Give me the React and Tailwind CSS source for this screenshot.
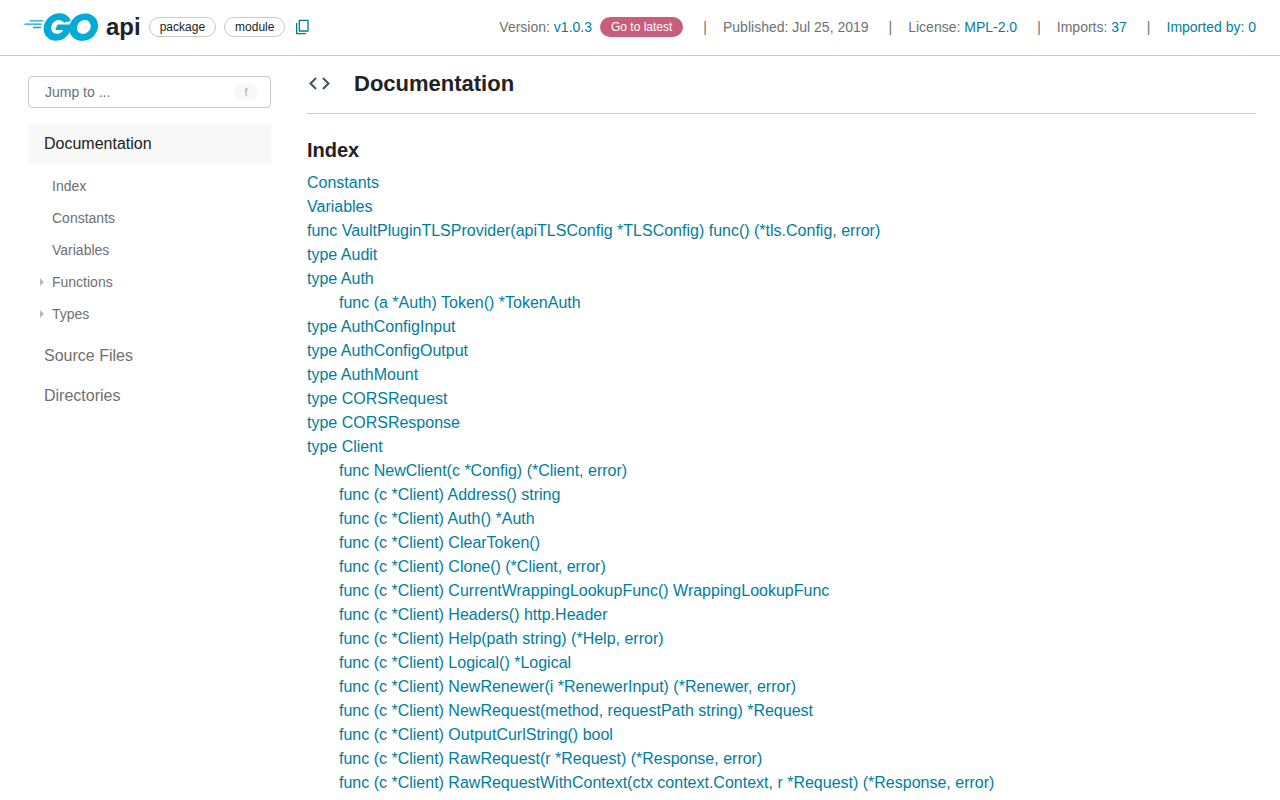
import React from "react";

const INDEX = [
  { label: "Constants" },
  { label: "Variables" },
  { label: "func VaultPluginTLSProvider(apiTLSConfig *TLSConfig) func() (*tls.Config, error)" },
  { label: "type Audit" },
  { label: "type Auth", children: ["func (a *Auth) Token() *TokenAuth"] },
  { label: "type AuthConfigInput" },
  { label: "type AuthConfigOutput" },
  { label: "type AuthMount" },
  { label: "type CORSRequest" },
  { label: "type CORSResponse" },
  {
    label: "type Client",
    children: [
      "func NewClient(c *Config) (*Client, error)",
      "func (c *Client) Address() string",
      "func (c *Client) Auth() *Auth",
      "func (c *Client) ClearToken()",
      "func (c *Client) Clone() (*Client, error)",
      "func (c *Client) CurrentWrappingLookupFunc() WrappingLookupFunc",
      "func (c *Client) Headers() http.Header",
      "func (c *Client) Help(path string) (*Help, error)",
      "func (c *Client) Logical() *Logical",
      "func (c *Client) NewRenewer(i *RenewerInput) (*Renewer, error)",
      "func (c *Client) NewRequest(method, requestPath string) *Request",
      "func (c *Client) OutputCurlString() bool",
      "func (c *Client) RawRequest(r *Request) (*Response, error)",
      "func (c *Client) RawRequestWithContext(ctx context.Context, r *Request) (*Response, error)",
    ],
  },
];

const SECTIONS = [
  { label: "Index" },
  { label: "Constants" },
  { label: "Variables" },
  { label: "Functions", expandable: true },
  { label: "Types", expandable: true },
];

function Logo() {
  return (
    <svg viewBox="0 0 205.4 76.7" className="h-7 w-[74px]" fill="#00acd7" aria-hidden="true">
      <path d="M15.5,23.2c-0.4,0-0.5-0.2-0.3-0.5l2.1-2.7c0.2-0.3,0.7-0.5,1.1-0.5l35.7,0c0.4,0,0.5,0.3,0.3,0.6l-1.7,2.6c-0.2,0.3-0.7,0.6-1,0.6L15.5,23.2z" />
      <path d="M0.4,32.4c-0.4,0-0.5-0.2-0.3-0.5l2.1-2.7c0.2-0.3,0.7-0.5,1.1-0.5l45.6,0c0.4,0,0.6,0.3,0.5,0.6l-0.8,2.4c-0.1,0.4-0.5,0.6-0.9,0.6L0.4,32.4z" />
      <path d="M24.6,41.6c-0.4,0-0.5-0.3-0.3-0.6l1.4-2.5c0.2-0.3,0.6-0.6,1-0.6l20,0c0.4,0,0.6,0.3,0.6,0.7L47.1,41c0,0.4-0.4,0.7-0.7,0.7L24.6,41.6z" />
      <path d="M128.3,21.4c-6.3,1.6-10.6,2.8-16.8,4.4c-1.5,0.4-1.6,0.5-2.9-1c-1.5-1.7-2.6-2.8-4.7-3.8c-6.3-3.1-12.4-2.2-18.1,1.5c-6.8,4.4-10.3,10.9-10.2,19c0.1,8,5.6,14.6,13.5,15.7c6.8,0.9,12.5-1.5,17-6.6c0.9-1.1,1.7-2.3,2.7-3.7c-3.6,0-8.1,0-19.3,0c-2.1,0-2.6-1.3-1.9-3c1.3-3.1,3.7-8.3,5.1-10.9c0.3-0.6,1-1.6,2.5-1.6c5.1,0,23.9,0,36.4,0c-0.2,2.7-0.2,5.4-0.6,8.1c-1.1,7.2-3.8,13.8-8.2,19.6c-7.2,9.5-16.6,15.4-28.5,17c-9.8,1.3-18.9-0.6-26.9-6.6c-7.4-5.6-11.6-13-12.7-22.2c-1.3-10.9,1.9-20.7,8.5-29.3c7.1-9.3,16.5-15.2,28-17.3c9.4-1.7,18.4-0.6,26.5,4.9c5.3,3.5,9.1,8.3,11.6,14.1C130,20.6,129.9,21.1,128.3,21.4z" />
      <path d="M161.5,76.7c-9.1-0.2-17.4-2.8-24.4-8.8c-5.9-5.1-9.6-11.6-10.8-19.3c-1.8-11.3,1.3-21.3,8.1-30.2c7.3-9.6,16.1-14.6,28-16.7c10.2-1.8,19.8-0.8,28.5,5.1c7.9,5.4,12.8,12.7,14.1,22.3c1.7,13.5-2.2,24.5-11.5,33.9c-6.6,6.7-14.7,10.9-24,12.8C166.8,76.3,164.1,76.4,161.5,76.7z M185.3,36.3c-0.1-1.3-0.1-2.3-0.3-3.3c-1.8-9.9-10.9-15.5-20.4-13.3c-9.3,2.1-15.3,8-17.5,17.4c-1.8,7.8,2,15.7,9.2,18.9c5.5,2.4,11,2.1,16.3-0.6C180.5,51.3,184.8,44.7,185.3,36.3z" />
    </svg>
  );
}

function Link({ children }) {
  return (
    <a href="#" className="text-[#007d9c] hover:underline">
      {children}
    </a>
  );
}

function Chip({ children }) {
  return (
    <span className="flex h-5 items-center rounded-full border border-[#c6c8ca] px-2.5 text-xs text-[#202224]">
      {children}
    </span>
  );
}

function Divider() {
  return <span className="pr-4 pl-5 text-[#6e7072]">|</span>;
}

function Header() {
  return (
    <header className="flex h-14 items-center justify-between border-b border-[#c6c8ca] px-6 pb-0.5">
      <div className="flex items-center">
        <a href="#" aria-label="Go home">
          <Logo />
        </a>
        <h1 className="ml-2 text-2xl font-bold">api</h1>
        <div className="ml-2 flex items-center gap-2">
          <Chip>package</Chip>
          <Chip>module</Chip>
          <button type="button" aria-label="Copy path" className="pl-px text-[#007d9c]">
            <svg viewBox="0 0 24 24" className="size-4" fill="currentColor">
              <path d="M22 1H7v18h15V1zm-2 16H9V3h11v14zM3 6h2v15h13v2H3V6z" />
            </svg>
          </button>
        </div>
      </div>
      <div className="flex items-center text-sm text-[#6e7072]">
        <span>
          Version: <Link>v1.0.3</Link>
        </span>
        <a
          href="#"
          className="ml-2 flex h-5 items-center rounded-full bg-[#c85e7c] px-[11px] text-xs text-white"
        >
          Go to latest
        </a>
        <Divider />
        <span>Published: Jul 25, 2019</span>
        <Divider />
        <span>
          License: <Link>MPL-2.0</Link>
        </span>
        <Divider />
        <span>
          Imports: <Link>37</Link>
        </span>
        <Divider />
        <Link>Imported by: 0</Link>
      </div>
    </header>
  );
}

function Sidebar() {
  return (
    <nav className="w-[243px] shrink-0 pt-5 text-[#6e7072]">
      <label className="flex h-8 items-center rounded border border-[#c6c8ca] pr-3 pl-4">
        <input
          type="text"
          aria-label="Jump to"
          placeholder="Jump to ..."
          className="min-w-0 flex-1 bg-transparent text-sm outline-none placeholder:text-[#6e7072]"
        />
        <kbd className="flex h-4 w-6 items-center justify-center rounded-full bg-[#f8f8f8] font-[Liberation_Sans,Arial,sans-serif] text-[11px] text-[#aaacae]">
          f
        </kbd>
      </label>
      <a href="#" className="mt-4 flex h-10 items-center bg-[#f8f8f8] px-4 text-[#202224]">
        Documentation
      </a>
      <ul className="mt-1.5 text-sm">
        {SECTIONS.map(({ label, expandable }) => (
          <li key={label}>
            <a href="#" className="flex h-8 items-center pl-3">
              <span className="w-3">
                {expandable && (
                  <svg viewBox="0 0 4 8" className="h-2 w-1" fill="#b8babc">
                    <path d="M0 0l4 4-4 4z" />
                  </svg>
                )}
              </span>
              {label}
            </a>
          </li>
        ))}
      </ul>
      <a href="#" className="mt-1.5 flex h-10 items-center px-4">
        Source Files
      </a>
      <a href="#" className="flex h-10 items-center px-4">
        Directories
      </a>
    </nav>
  );
}

export default function App() {
  return (
    <div className="h-screen overflow-hidden bg-white font-[Liberation_Sans,Arial,sans-serif] text-base text-[#202224]">
      <Header />
      <div className="flex gap-9 pr-6 pl-7">
        <Sidebar />
        <main className="min-w-0 flex-1">
          <h2 className="flex h-[58px] items-center gap-[22px] border-b border-[#c6c8ca] pb-0.5 text-[22px] font-bold">
            <svg viewBox="0 0 24 24" className="size-[25px]" fill="#3e5566">
              <path d="M9.4 16.6L4.8 12l4.6-4.6L8 6l-6 6 6 6 1.4-1.4zm5.2 0l4.6-4.6-4.6-4.6L16 6l6 6-6 6-1.4-1.4z" />
            </svg>
            Documentation
          </h2>
          <h3 className="mt-[22px] text-xl font-bold">Index</h3>
          <ul className="mt-[7px]">
            {INDEX.map(({ label, children }) => (
              <li key={label}>
                <Link>{label}</Link>
                {children && (
                  <ul className="pl-8">
                    {children.map((child) => (
                      <li key={child}>
                        <Link>{child}</Link>
                      </li>
                    ))}
                  </ul>
                )}
              </li>
            ))}
          </ul>
        </main>
      </div>
    </div>
  );
}
